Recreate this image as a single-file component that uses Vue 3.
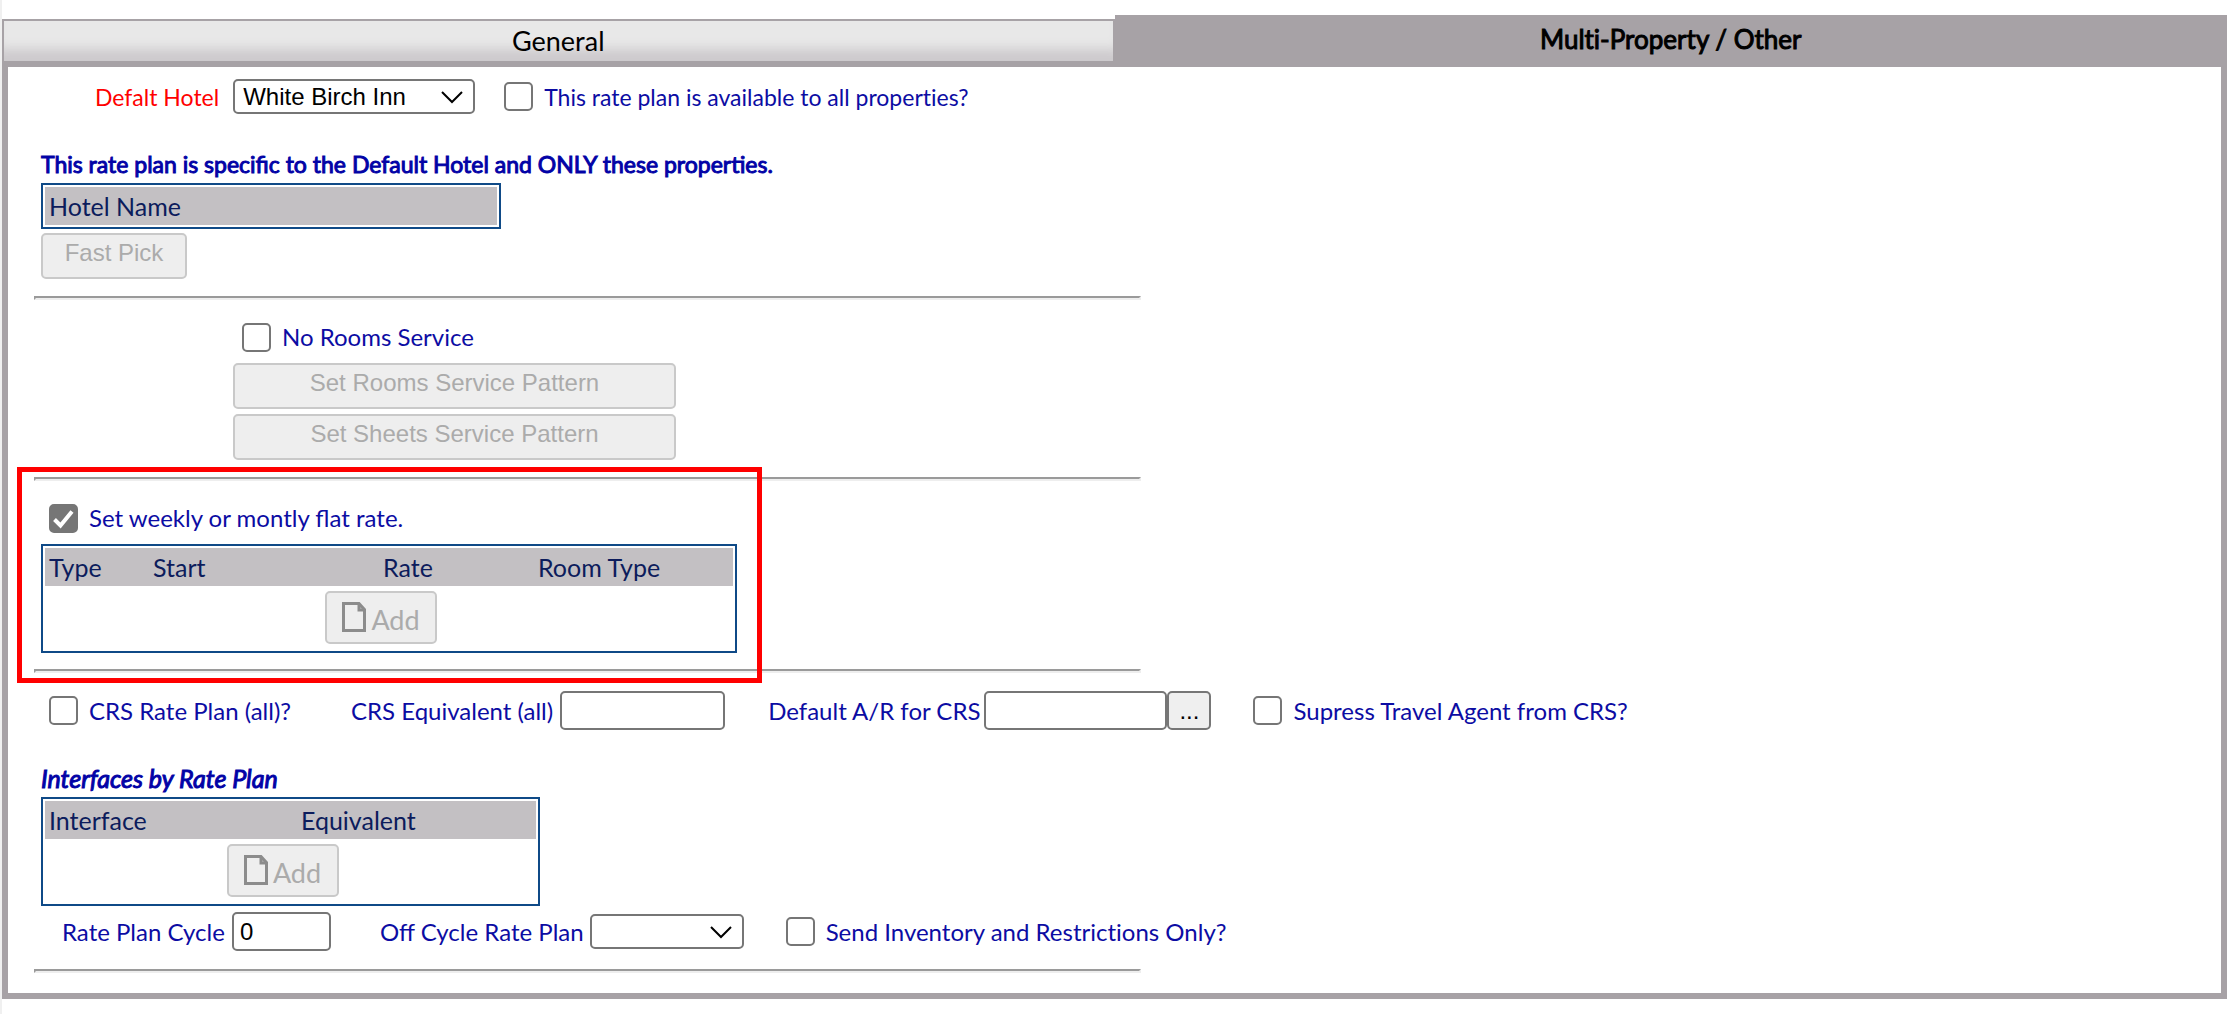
<script setup>
import { ref } from 'vue'

const hotel = ref('White Birch Inn')
const allProperties = ref(false)
const noRooms = ref(false)
const flatRate = ref(true)
const crsRatePlan = ref(false)
const crsEquivalent = ref('')
const defaultAr = ref('')
const suppressAgent = ref(false)
const cycle = ref('0')
const offCycle = ref('')
const inventoryOnly = ref(false)
</script>

<template>
  <main class="page">
    <nav class="tabs">
      <button type="button" class="tab">General</button>
      <button type="button" class="tab active">Multi-Property / Other</button>
    </nav>

    <form class="panel" @submit.prevent>
      <div class="row hotel-row">
        <label class="required" for="hotel">Defalt Hotel</label>
        <span class="select hotel-select">
          <select id="hotel" v-model="hotel">
            <option>White Birch Inn</option>
          </select>
          <svg viewBox="0 0 22 14" aria-hidden="true"><path d="M1 2 L11 12 L21 2" /></svg>
        </span>
        <label class="check"><input v-model="allProperties" type="checkbox" />This rate plan is available to all properties?</label>
      </div>

      <h2 class="title">This rate plan is specific to the Default Hotel and ONLY these properties.</h2>
      <table class="grid hotels">
        <thead>
          <tr><th>Hotel Name</th></tr>
        </thead>
      </table>
      <button type="button" class="btn pick" disabled>Fast Pick</button>

      <hr />

      <div class="service">
        <label class="check"><input v-model="noRooms" type="checkbox" />No Rooms Service</label>
        <button type="button" class="btn" disabled>Set Rooms Service Pattern</button>
        <button type="button" class="btn" disabled>Set Sheets Service Pattern</button>
      </div>

      <div class="flat">
        <hr />
        <label class="check flat-check"><input v-model="flatRate" type="checkbox" />Set weekly or montly flat rate.</label>
        <table class="grid rates">
          <colgroup><col class="c-type" /><col class="c-start" /><col class="c-rate" /><col /></colgroup>
          <thead>
            <tr><th>Type</th><th>Start</th><th>Rate</th><th>Room Type</th></tr>
          </thead>
          <tbody>
            <tr>
              <td colspan="4">
                <button type="button" class="add" disabled>
                  <svg viewBox="0 0 24 30" aria-hidden="true"><path d="M1.5 1.5 H17 L22.5 7.5 V28.5 H1.5 Z M17 1.5 V8 H22.5" /></svg>Add
                </button>
              </td>
            </tr>
          </tbody>
        </table>
        <hr />
        <div class="highlight"></div>
      </div>

      <div class="row crs-row">
        <label class="check"><input v-model="crsRatePlan" type="checkbox" />CRS Rate Plan (all)?</label>
        <span class="field crs-field">
          <label for="crs">CRS Equivalent (all)</label>
          <input id="crs" v-model="crsEquivalent" type="text" class="text w-crs" />
        </span>
        <span class="field ar-field">
          <label for="ar">Default A/R for CRS</label>
          <span class="lookup">
            <input id="ar" v-model="defaultAr" type="text" class="text w-ar" />
            <button type="button" class="dots" aria-label="Look up">...</button>
          </span>
        </span>
        <label class="check agent"><input v-model="suppressAgent" type="checkbox" />Supress Travel Agent from CRS?</label>
      </div>

      <h2 class="title italic">Interfaces by Rate Plan</h2>
      <table class="grid interfaces">
        <colgroup><col class="c-interface" /><col /></colgroup>
        <thead>
          <tr><th>Interface</th><th>Equivalent</th></tr>
        </thead>
        <tbody>
          <tr>
            <td colspan="2">
              <button type="button" class="add" disabled>
                <svg viewBox="0 0 24 30" aria-hidden="true"><path d="M1.5 1.5 H17 L22.5 7.5 V28.5 H1.5 Z M17 1.5 V8 H22.5" /></svg>Add
              </button>
            </td>
          </tr>
        </tbody>
      </table>

      <div class="row cycle-row">
        <span class="field">
          <label for="cycle">Rate Plan Cycle</label>
          <input id="cycle" v-model="cycle" type="text" class="text w-cycle" />
        </span>
        <span class="field off-field">
          <label for="off">Off Cycle Rate Plan</label>
          <span class="select off-select">
            <select id="off" v-model="offCycle">
              <option value=""></option>
            </select>
            <svg viewBox="0 0 22 14" aria-hidden="true"><path d="M1 2 L11 12 L21 2" /></svg>
          </span>
        </span>
        <label class="check send"><input v-model="inventoryOnly" type="checkbox" />Send Inventory and Restrictions Only?</label>
      </div>

      <hr />
    </form>
  </main>
</template>

<style>
body {
  margin: 0;
  background: #fff;
}
</style>

<style scoped>
* {
  box-sizing: border-box;
}

.page {
  min-height: 100vh;
  padding: 15px 0;
  border-left: 2px solid #f0f0f0;
  font-family: Lato, "Liberation Sans", sans-serif;
  font-size: 24px;
  line-height: 30px;
  color: #0c0ca3;
}

.tabs {
  display: flex;
  align-items: flex-end;
}

.tab {
  flex: 1;
  height: 42px;
  padding: 0;
  border: 2px solid #a7a2a6;
  border-bottom: 0;
  border-radius: 0;
  background: #e8e8e8;
  box-shadow: inset 0 -20px 12px -8px #cdcacd;
  font: 27px/32px Lato, sans-serif;
  font-variant-ligatures: none;
  color: #000;
}

.tab.active {
  height: 46px;
  background: #a7a2a6;
  box-shadow: none;
  font-size: 26px;
  -webkit-text-stroke: 1px #000;
}

.panel {
  padding: 12px 0 20px 26px;
  border: 6px solid #a7a2a6;
}

hr {
  width: 1107px;
  max-width: 100%;
  height: 4px;
  margin: 0;
  border: 2px solid;
  border-color: #9a9a9a #eee #eee #9a9a9a;
}

.row,
.field,
.check {
  display: flex;
  align-items: center;
}

.field {
  gap: 7px;
}

.check {
  gap: 11px;
  font-variant-ligatures: none;
}

.check input {
  flex: none;
  appearance: none;
  width: 29px;
  height: 29px;
  margin: 0;
  border: 2px solid #767676;
  border-radius: 5px;
  background: #fff;
}

.check input:checked {
  background: #767676 url("data:image/svg+xml,%3Csvg xmlns='http://www.w3.org/2000/svg' viewBox='0 0 25 25'%3E%3Cpath d='M3.5 13.5 L9.5 19.5 L21 5.5' fill='none' stroke='white' stroke-width='4'/%3E%3C/svg%3E") center / 25px 25px no-repeat;
}

.hotel-row {
  padding-left: 61px;
  font-size: 23px;
}

.required {
  color: #f00;
}

.select {
  position: relative;
  display: block;
  height: 35px;
}

.select select {
  appearance: none;
  width: 100%;
  height: 100%;
  padding: 0 8px;
  border: 2px solid #767676;
  border-radius: 5px;
  background: #fff;
  font: 24px/30px "Liberation Sans", Arial, sans-serif;
  color: #000;
}

.select svg {
  position: absolute;
  top: 11px;
  right: 12px;
  width: 22px;
  height: 14px;
  fill: none;
  stroke: #000;
  stroke-width: 2;
  pointer-events: none;
}

.hotel-select {
  width: 242px;
  margin: 0 29px 0 14px;
}

.off-select {
  width: 154px;
}

.title {
  margin: 35px 0 4px 7px;
  font-size: 23px;
  font-weight: 400;
  line-height: 30px;
  color: #0202a6;
  -webkit-text-stroke: 1px #0202a6;
}

.title.italic {
  margin-top: 33px;
  font-size: 25px;
  font-style: italic;
}

.grid {
  margin-left: 7px;
  border: 2px solid #0f4a87;
  border-spacing: 2px;
  table-layout: fixed;
}

.grid th {
  height: 38px;
  padding: 0 4px;
  background: #c3c0c3;
  font-size: 25px;
  font-weight: 400;
  text-align: left;
  color: #0c1c5c;
}

.grid td {
  height: 63px;
  padding: 0 16px 0 0;
  text-align: center;
}

.hotels {
  width: 460px;
}

.rates,
.interfaces {
  border-spacing: 0;
  padding: 2px;
}

.rates {
  width: 696px;
}

.interfaces {
  width: 499px;
}

.c-type {
  width: 104px;
}

.c-start {
  width: 230px;
}

.c-rate {
  width: 155px;
}

.c-interface {
  width: 252px;
}

.btn {
  display: block;
  height: 46px;
  padding: 0 0 6px;
  border: 2px solid #c9c9c9;
  border-radius: 5px;
  background: #eee;
  font: 24px/30px "Liberation Sans", Arial, sans-serif;
  color: #ababab;
}

.pick {
  width: 146px;
  margin: 4px 0 17px 7px;
}

.service {
  display: flex;
  flex-direction: column;
  gap: 5px;
  width: 443px;
  margin: 22px 0 17px 199px;
}

.service .check {
  margin: 0 0 6px 9px;
}

.flat {
  position: relative;
}

.flat-check {
  margin: 22px 0 11px 15px;
  font-variant-ligatures: normal;
}

.rates {
  margin-bottom: 16px;
}

.highlight {
  position: absolute;
  inset: -10px auto -10px -17px;
  width: 745px;
  border: 5px solid #f00;
  pointer-events: none;
}

.add {
  display: inline-flex;
  align-items: center;
  justify-content: center;
  gap: 5px;
  width: 112px;
  height: 53px;
  padding: 4px 0 0;
  border: 2px solid #c9c9c9;
  border-radius: 5px;
  background: #eee;
  font: 27px/34px Lato, sans-serif;
  color: #ababab;
  vertical-align: middle;
}

.add svg {
  width: 24px;
  height: 30px;
  margin-bottom: 6px;
  fill: none;
  stroke: #8c8c8c;
  stroke-width: 3;
}

.text {
  height: 39px;
  padding: 0 6px;
  border: 2px solid #767676;
  border-radius: 5px;
  background: #fff;
  font: 24px/30px "Liberation Sans", Arial, sans-serif;
  color: #000;
}

.w-crs {
  width: 165px;
}

.w-ar {
  width: 183px;
}

.w-cycle {
  width: 99px;
}

.lookup {
  display: flex;
}

.dots {
  width: 44px;
  height: 39px;
  padding: 0;
  border: 2px solid #767676;
  border-radius: 5px;
  background: #efefef;
  font: 24px/30px "Liberation Sans", Arial, sans-serif;
  color: #000;
}

.crs-row {
  padding: 18px 0 0 15px;
}

.crs-field {
  margin-left: 60px;
}

.ar-field {
  gap: 4px;
  margin-left: 43px;
}

.agent,
.send {
  margin-left: 42px;
}

.cycle-row {
  padding: 6px 0 18px 28px;
}

.off-field {
  margin-left: 49px;
}

.off-field {
  gap: 6px;
}
</style>
